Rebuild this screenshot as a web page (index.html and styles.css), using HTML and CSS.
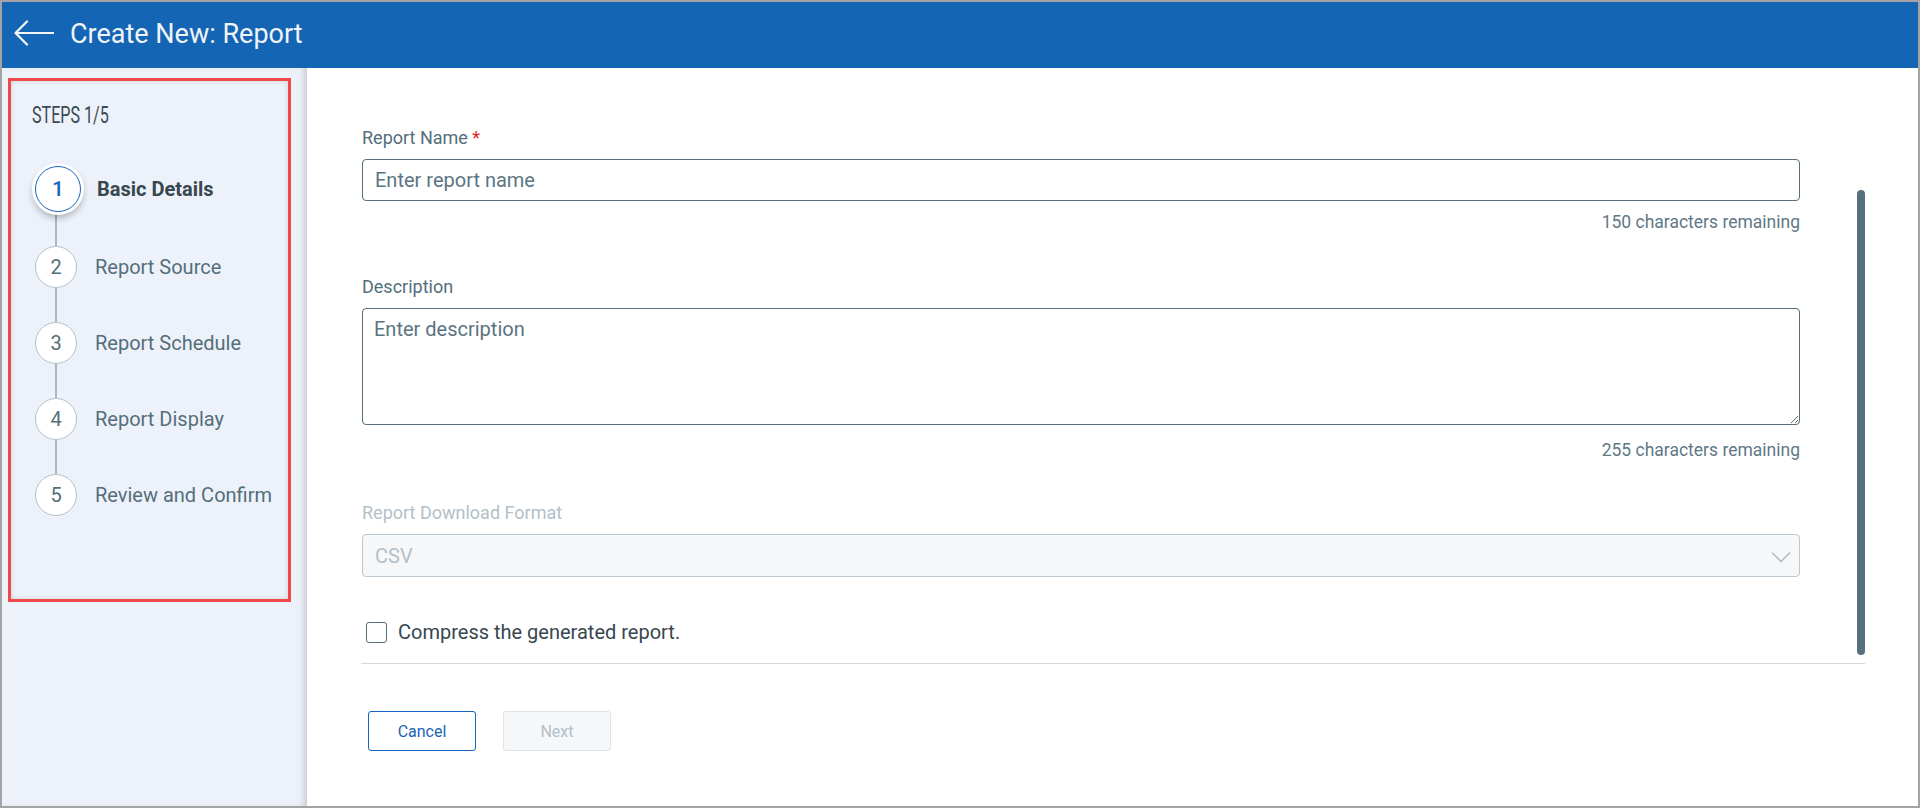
FILE: index.html
```html
<!DOCTYPE html>
<html lang="en">
<head>
<meta charset="utf-8">
<title>Create New: Report</title>
<link rel="stylesheet" href="styles.css">
</head>
<body>
<div class="frame">
  <header class="topbar">
    <svg class="back" width="40" height="26" viewBox="0 0 40 26" aria-hidden="true">
      <path d="M1.5 13 H39.5 M13 1.5 L1.5 13 L13 24.5" fill="none" stroke="#f2f6fa" stroke-width="2.2" stroke-linecap="round" stroke-linejoin="round"/>
    </svg>
    <h1 class="title">Create New: Report</h1>
  </header>
  <div class="body">
    <aside class="sidebar">
      <div class="stepbox">
        <div class="steps-head"><span class="steps-text">STEPS 1/5</span></div>
        <ol class="steps">
          <li class="step active"><span class="circle">1</span><span class="label">Basic Details</span></li>
          <li class="connector"></li>
          <li class="step"><span class="circle">2</span><span class="label">Report Source</span></li>
          <li class="connector"></li>
          <li class="step"><span class="circle">3</span><span class="label">Report Schedule</span></li>
          <li class="connector"></li>
          <li class="step"><span class="circle">4</span><span class="label">Report Display</span></li>
          <li class="connector"></li>
          <li class="step"><span class="circle">5</span><span class="label">Review and Confirm</span></li>
        </ol>
      </div>
    </aside>
    <main class="main">
      <div class="scroll">
        <form class="form">
          <label class="field-label" for="rname">Report Name <span class="req">*</span></label>
          <input class="input" id="rname" type="text" placeholder="Enter report name">
          <div class="helper first">150 characters remaining</div>

          <label class="field-label desc" for="rdesc">Description</label>
          <textarea class="textarea" id="rdesc" placeholder="Enter description"></textarea>
          <div class="helper second">255 characters remaining</div>

          <div class="field-label disabled fmt">Report Download Format</div>
          <div class="select">
            <span class="select-value">CSV</span>
            <svg class="chev" width="20" height="12" viewBox="0 0 20 12" aria-hidden="true">
              <path d="M1 1.5 L10 10.5 L19 1.5" fill="none" stroke="#b4c1c9" stroke-width="1.6"/>
            </svg>
          </div>

          <label class="check-row">
            <span class="checkbox"></span>
            <span class="check-label">Compress the generated report.</span>
          </label>
        </form>
        <div class="thumb"></div>
      </div>
      <div class="actions">
        <button class="btn btn-outline" type="button">Cancel</button>
        <button class="btn btn-disabled" type="button">Next</button>
      </div>
    </main>
  </div>
</div>
</body>
</html>
```

FILE: styles.css
```css
* { box-sizing: border-box; }
html, body { margin: 0; padding: 0; }
body {
  font-family: Roboto, "Liberation Sans", Arial, sans-serif;
  background: #ffffff;
  color: #37474f;
}
.frame {
  width: 1920px;
  height: 808px;
  border: 2px solid #a4a4a4;
  display: flex;
  flex-direction: column;
  overflow: hidden;
}
.topbar {
  height: 66px;
  flex: 0 0 66px;
  background: #1565b5;
  display: flex;
  align-items: center;
  padding-left: 12px;
  padding-bottom: 3px;
}
.back { display: block; margin-right: 16px; margin-bottom: 1px; }
.title {
  margin: 0;
  font-size: 27px;
  line-height: 30px;
  font-weight: 400;
  color: #f0f4f9;
}
.body {
  flex: 1;
  display: flex;
  min-height: 0;
}
.sidebar {
  width: 305px;
  flex: 0 0 305px;
  background: #edf2fa;
  box-shadow: inset -6px 0 6px -3px rgba(60, 70, 80, 0.22);
  padding: 10px 0 0 6px;
}
.stepbox {
  width: 283px;
  height: 524px;
  border: 3px solid #f04848;
  box-shadow: inset 0 0 4px 1px rgba(40, 50, 60, 0.12);
  padding: 21px 0 0 21px;
}
.steps-head {
  height: 28px;
  margin-bottom: 36px;
}
.steps-text {
  display: inline-block;
  font-size: 23px;
  line-height: 28px;
  color: #3a4a54;
  transform: scaleX(0.7);
  transform-origin: left center;
  white-space: nowrap;
}
.steps {
  list-style: none;
  margin: 0 0 0 3px;
  padding: 0;
}
.step {
  display: flex;
  align-items: center;
  height: 42px;
}
.circle {
  width: 42px;
  height: 42px;
  flex: 0 0 42px;
  border-radius: 50%;
  background: #ffffff;
  border: 1px solid #b3c2cb;
  display: flex;
  align-items: center;
  justify-content: center;
  font-size: 20px;
  color: #546e7a;
}
.label {
  margin-left: 18px;
  font-size: 20px;
  color: #546e7a;
  white-space: nowrap;
}
.step.active { height: 46px; }
.step.active .circle {
  width: 46px;
  height: 46px;
  flex-basis: 46px;
  border: 1px solid #1565c0;
  color: #1565c0;
  font-size: 21px;
  font-weight: 500;
  box-shadow: 0 0 0 3px #ffffff, 0 4px 7px 2px rgba(0, 0, 0, 0.28);
}
.step.active .label {
  margin-left: 16px;
  font-weight: 700;
  color: #37474f;
}
.connector {
  width: 2px;
  height: 34px;
  margin-left: 20px;
  background: #abb8c1;
}
.main {
  flex: 1;
  display: flex;
  flex-direction: column;
  padding-left: 54px;
  background: #ffffff;
}
.scroll {
  width: 1504px;
  height: 596px;
  flex: 0 0 596px;
  border-bottom: 1px solid #d3d8dd;
  display: flex;
}
.form {
  width: 1438px;
  margin-left: 1px;
  padding-top: 60px;
  display: flex;
  flex-direction: column;
}
.field-label {
  display: block;
  font-size: 18px;
  line-height: 20px;
  color: #546e7a;
}
.req { color: #e8281f; }
.field-label.desc { margin-top: 45px; }
.field-label.fmt { margin-top: 43px; }
.field-label.disabled { color: #b3c0c8; }
.input, .textarea {
  display: block;
  width: 100%;
  margin-top: 11px;
  border: 1px solid #546e7a;
  border-radius: 4px;
  background: #ffffff;
  font-family: Roboto, "Liberation Sans", Arial, sans-serif;
  font-size: 20px;
  line-height: 24px;
  color: #37474f;
  outline: none;
}
.input {
  height: 42px;
  padding: 0 12px;
}
.textarea {
  height: 117px;
  padding: 8px 11px;
  resize: both;
}
.input::placeholder, .textarea::placeholder { color: #5b7482; opacity: 1; }
.helper {
  font-size: 17.5px;
  line-height: 20px;
  color: #5f7886;
  text-align: right;
}
.helper.first { margin-top: 11px; }
.helper.second { margin-top: 15px; }
.select {
  margin-top: 11px;
  height: 43px;
  border: 1px solid #bcc8cf;
  border-radius: 4px;
  background: #f5f7f9;
  display: flex;
  align-items: center;
  padding: 0 8px 0 12px;
}
.select-value {
  flex: 1;
  font-size: 20px;
  color: #b3c0c8;
}
.chev { display: block; margin-top: 2px; }
.check-row {
  margin-top: 43px;
  height: 24px;
  display: flex;
  align-items: center;
  padding-left: 4px;
}
.checkbox {
  width: 21px;
  height: 21px;
  border: 1.5px solid #546e7a;
  border-radius: 3px;
  background: #ffffff;
}
.check-label {
  margin-left: 11px;
  font-size: 20px;
  line-height: 24px;
  color: #37474f;
}
.thumb {
  width: 8px;
  height: 465px;
  margin-top: 122px;
  margin-left: auto;
  border-radius: 4px;
  background: #56707e;
}
.actions {
  display: flex;
  gap: 27px;
  padding-top: 47px;
  padding-left: 7px;
}
.btn {
  width: 108px;
  height: 40px;
  border-radius: 3px;
  font-family: Roboto, "Liberation Sans", Arial, sans-serif;
  font-size: 16px;
  font-weight: 400;
  cursor: pointer;
}
.btn-outline {
  background: #ffffff;
  border: 1.5px solid #1565c0;
  color: #1a64b4;
}
.btn-disabled {
  background: #f5f7f9;
  border: 1px solid #dde3e8;
  color: #b3c0c8;
}
```
